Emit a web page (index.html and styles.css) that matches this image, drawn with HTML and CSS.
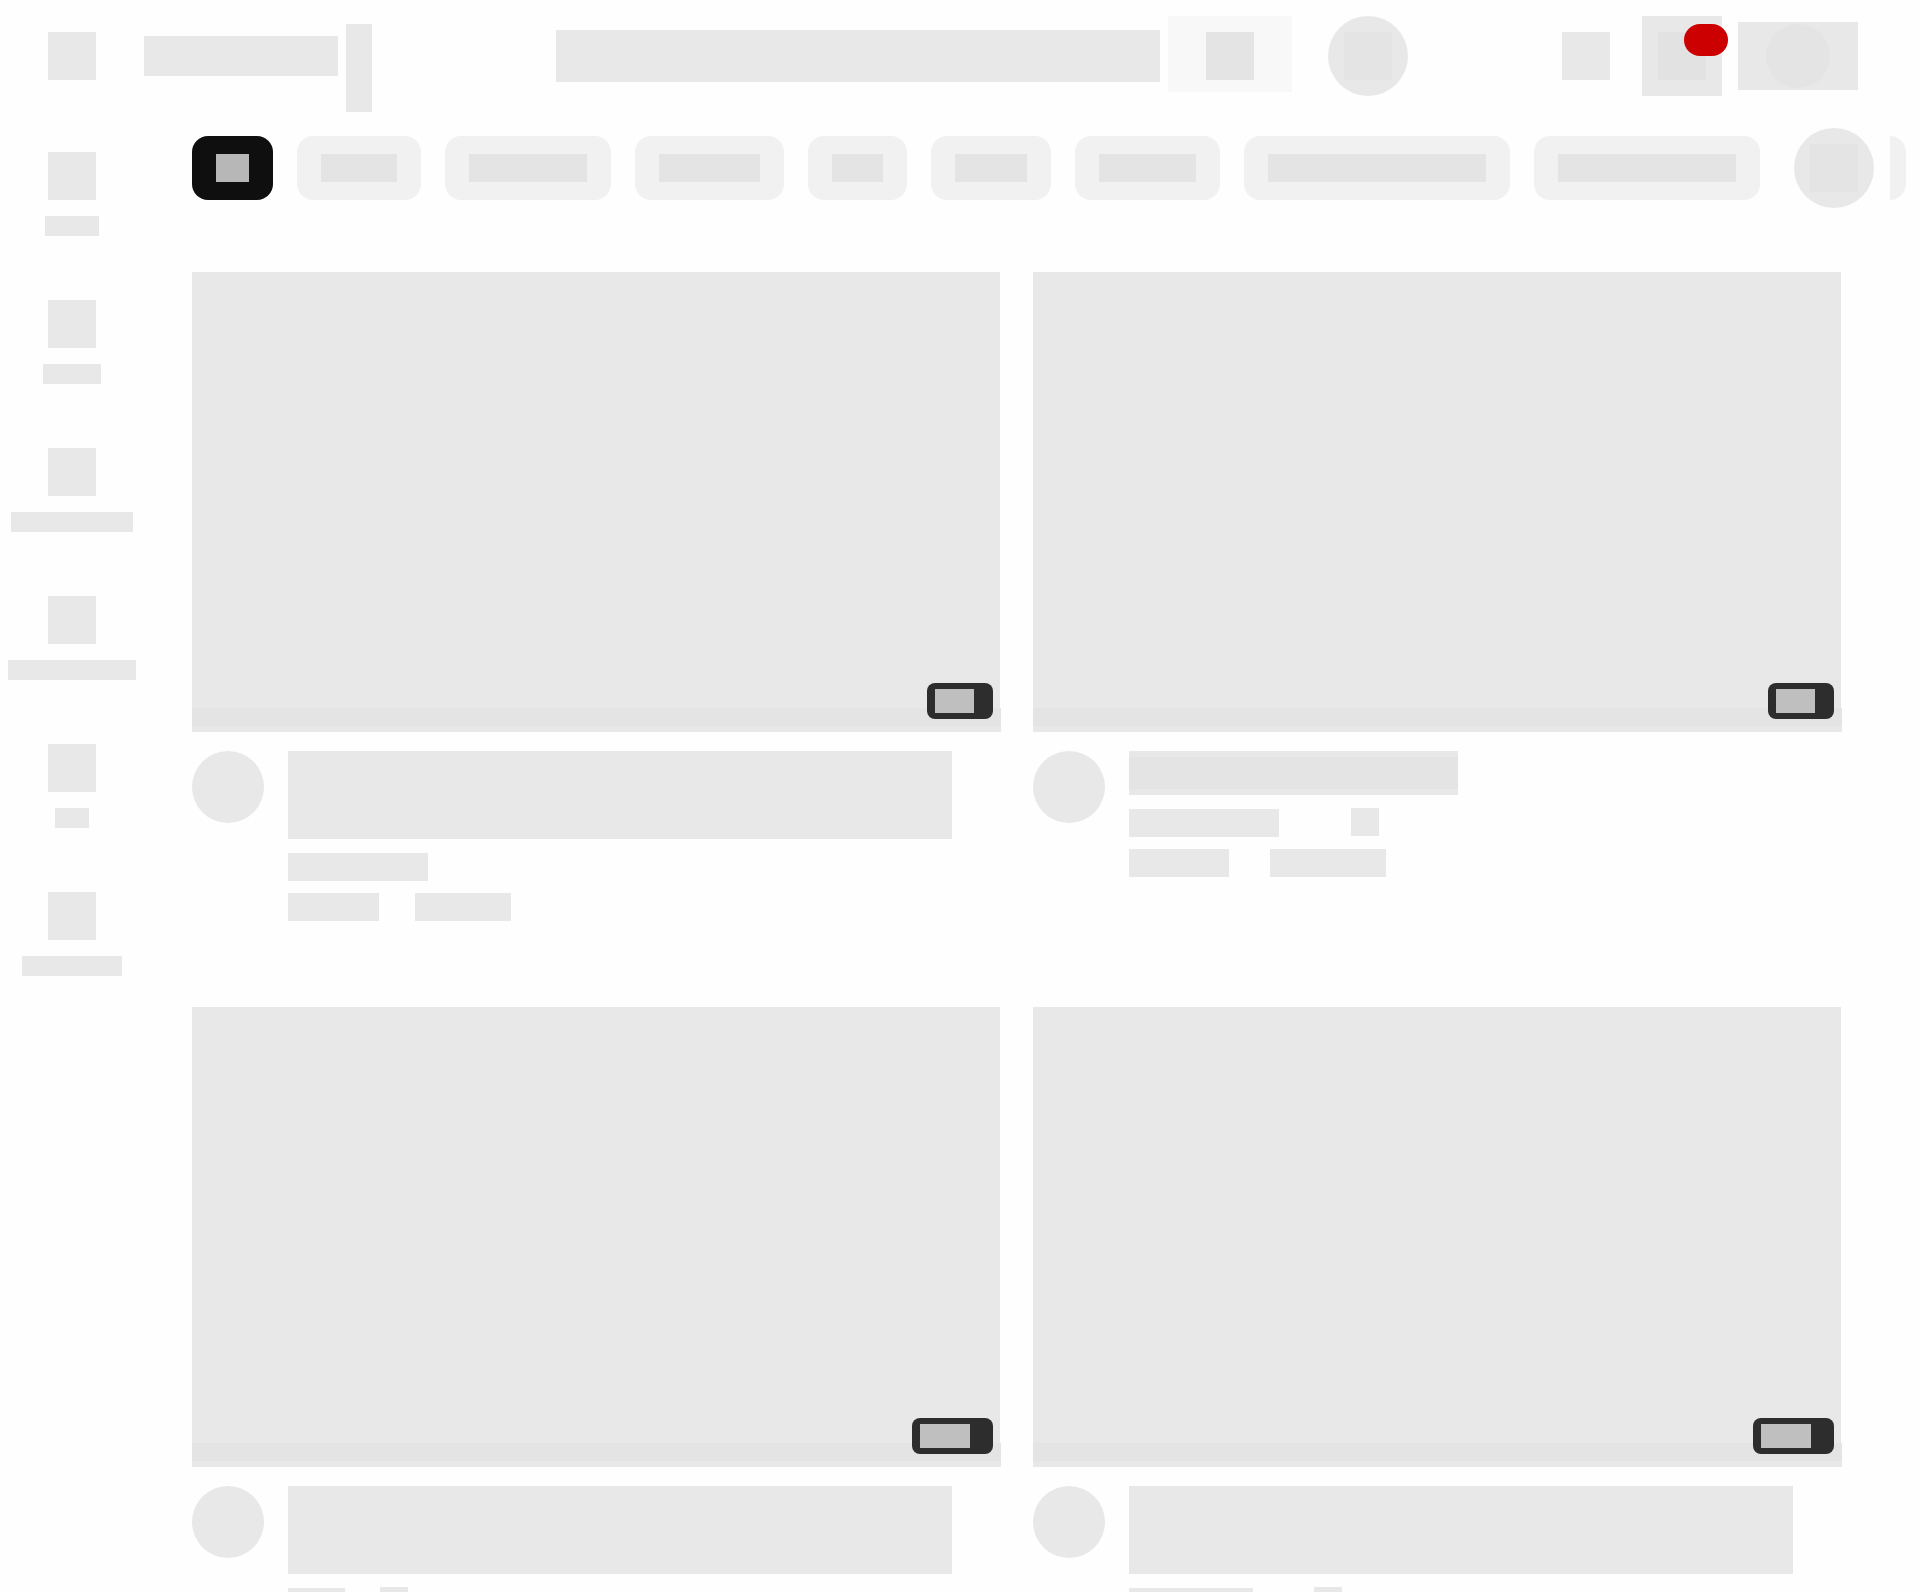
FILE: index.html
```html
<!DOCTYPE html>
<html lang="en">
<head>
<meta charset="utf-8">
<meta name="viewport" content="width=device-width, initial-scale=1">
<title>Home</title>
<link rel="stylesheet" href="styles.css">
</head>
<body>
<header class="topbar">
  <button class="icon" aria-label="Menu"></button>
  <div class="brand">
    <a class="logo" href="#" aria-label="Home"></a>
    <span class="country"></span>
  </div>
  <form class="search" role="search">
    <input class="search-box" type="text" aria-label="Search">
    <button class="search-button" type="button" aria-label="Run search"><span class="icon inner"></span></button>
    <button class="round voice" type="button" aria-label="Voice search"><span class="icon inner"></span></button>
  </form>
  <div class="account">
    <button class="icon" aria-label="Create"></button>
    <button class="bell" aria-label="Notifications"><span class="icon inner"></span><span class="count"></span></button>
    <button class="profile" aria-label="Account"><span class="face"></span></button>
  </div>
</header>
<div class="page">
  <nav class="rail" aria-label="Sections">
    <a class="rail-item" href="#" aria-label="Section 1"><span class="icon"></span><span class="rail-label" style="width:54px"></span></a>
    <a class="rail-item" href="#" aria-label="Section 2"><span class="icon"></span><span class="rail-label" style="width:58px"></span></a>
    <a class="rail-item" href="#" aria-label="Section 3"><span class="icon"></span><span class="rail-label" style="width:122px"></span></a>
    <a class="rail-item" href="#" aria-label="Section 4"><span class="icon"></span><span class="rail-label" style="width:128px"></span></a>
    <a class="rail-item" href="#" aria-label="Section 5"><span class="icon"></span><span class="rail-label" style="width:34px"></span></a>
    <a class="rail-item" href="#" aria-label="Section 6"><span class="icon"></span><span class="rail-label" style="width:100px"></span></a>
  </nav>
  <main class="content">
    <div class="filters">
      <div class="chips">
        <button class="chip active" aria-label="Filter 1"><span class="chip-label" style="width:33px"></span></button>
        <button class="chip" aria-label="Filter 2"><span class="chip-label" style="width:76px"></span></button>
        <button class="chip" aria-label="Filter 3"><span class="chip-label" style="width:118px"></span></button>
        <button class="chip" aria-label="Filter 4"><span class="chip-label" style="width:101px"></span></button>
        <button class="chip" aria-label="Filter 5"><span class="chip-label" style="width:51px"></span></button>
        <button class="chip" aria-label="Filter 6"><span class="chip-label" style="width:72px"></span></button>
        <button class="chip" aria-label="Filter 7"><span class="chip-label" style="width:97px"></span></button>
        <button class="chip" aria-label="Filter 8"><span class="chip-label" style="width:218px"></span></button>
        <button class="chip" aria-label="Filter 9"><span class="chip-label" style="width:178px"></span></button>
      </div>
      <button class="round" aria-label="Next filters"><span class="icon inner"></span></button>
      <span class="chip-end"></span>
    </div>
    <div class="feed">
      <article class="card">
        <a class="thumb" href="#" aria-label="Play video 1"><span class="still"></span><span class="progress"></span><span class="duration" style="width:66px"><span class="time" style="width:39px"></span></span></a>
        <div class="details">
          <span class="avatar"></span>
          <div class="text">
            <a class="title" href="#" aria-label="Video 1"></a>
            <div class="line"><span class="bar" style="width:140px"></span></div>
            <div class="line"><span class="slot" style="width:127px"><span class="bar" style="width:91px"></span></span><span class="bar" style="width:96px"></span></div>
          </div>
        </div>
      </article>
      <article class="card">
        <a class="thumb" href="#" aria-label="Play video 2"><span class="still"></span><span class="progress"></span><span class="duration" style="width:66px"><span class="time" style="width:39px"></span></span></a>
        <div class="details">
          <span class="avatar"></span>
          <div class="text">
            <a class="title short" href="#" aria-label="Video 2"></a>
            <div class="line"><span class="slot" style="width:222px"><span class="bar" style="width:150px"></span></span><span class="bar verified"></span></div>
            <div class="line"><span class="slot" style="width:141px"><span class="bar" style="width:100px"></span></span><span class="bar" style="width:116px"></span></div>
          </div>
        </div>
      </article>
      <article class="card">
        <a class="thumb" href="#" aria-label="Play video 3"><span class="still"></span><span class="progress"></span><span class="duration" style="width:81px"><span class="time" style="width:50px"></span></span></a>
        <div class="details">
          <span class="avatar"></span>
          <div class="text">
            <a class="title" href="#" aria-label="Video 3"></a>
            <div class="line"><span class="slot" style="width:92px"><span class="bar" style="width:57px"></span></span><span class="bar verified"></span></div>
          </div>
        </div>
      </article>
      <article class="card">
        <a class="thumb" href="#" aria-label="Play video 4"><span class="still"></span><span class="progress"></span><span class="duration" style="width:81px"><span class="time" style="width:50px"></span></span></a>
        <div class="details">
          <span class="avatar"></span>
          <div class="text">
            <a class="title" href="#" aria-label="Video 4"></a>
            <div class="line"><span class="slot" style="width:185px"><span class="bar" style="width:124px"></span></span><span class="bar verified"></span></div>
          </div>
        </div>
      </article>
    </div>
  </main>
</div>
</body>
</html>
```
FILE: styles.css
```css
:root {
  --page: #fefefe;
  --block: #e8e8e8;
  --block-inner: #e4e4e4;
  --chip: #f1f1f1;
}

* { box-sizing: border-box; }

body {
  margin: 0;
  height: 100vh;
  display: flex;
  flex-direction: column;
  overflow: hidden;
  background: var(--page);
  font-family: Roboto, "Liberation Sans", sans-serif;
}

button, input {
  margin: 0;
  padding: 0;
  border: 0;
  border-radius: 0;
  font: inherit;
}

.icon {
  display: block;
  flex: none;
  width: 48px;
  height: 48px;
  background: var(--block);
}
.icon.inner { background: var(--block-inner); }

.round {
  display: grid;
  place-items: center;
  flex: none;
  width: 80px;
  height: 80px;
  border-radius: 50%;
  background: var(--block);
}

/* Top bar */
.topbar {
  display: flex;
  flex: none;
  align-items: center;
  height: 112px;
  padding: 0 62px 0 48px;
}
.brand {
  display: flex;
  align-self: stretch;
  align-items: center;
  gap: 8px;
  margin-left: 48px;
}
.logo { width: 194px; height: 40px; background: var(--block); }
.country { align-self: flex-end; width: 26px; height: 88px; background: var(--block); }

.search {
  display: flex;
  flex: 1;
  align-items: center;
  height: 80px;
  min-width: 0;
  padding: 0 154px 0 184px;
}
.search-box {
  flex: 1;
  min-width: 0;
  height: 52px;
  padding: 0 16px;
  background: var(--block);
}
.search-button {
  display: flex;
  flex: none;
  align-self: flex-start;
  align-items: flex-start;
  justify-content: center;
  width: 124px;
  height: 76px;
  margin-left: 8px;
  padding-top: 16px;
  background: #f8f8f8;
}
.voice { margin-left: 36px; }

.account { display: flex; align-items: center; }
.bell {
  position: relative;
  display: grid;
  place-items: center;
  width: 80px;
  height: 80px;
  margin: 0 16px 0 32px;
  background: var(--block);
}
.bell .icon { background: #e2e2e2; }
.count {
  position: absolute;
  top: 8px;
  right: -6px;
  width: 44px;
  height: 32px;
  border-radius: 16px;
  background: #cc0000;
}
.profile {
  display: grid;
  place-items: center;
  width: 120px;
  height: 68px;
  background: var(--block);
}
.face { width: 64px; height: 64px; border-radius: 50%; background: var(--block-inner); }

/* Side rail */
.page { display: flex; flex: 1; min-height: 0; }
.rail {
  display: flex;
  flex: none;
  flex-direction: column;
  gap: 64px;
  width: 144px;
  padding-top: 40px;
}
.rail-item { display: flex; flex-direction: column; align-items: center; gap: 16px; }
.rail-label { height: 20px; background: var(--block); }

/* Filters */
.content {
  flex: 1;
  min-width: 0;
  padding-top: 16px;
  overflow-y: auto;
  scrollbar-width: none;
}
.filters {
  display: flex;
  align-items: center;
  gap: 16px;
  padding: 0 14px 0 48px;
}
.chips { display: flex; flex: 1; gap: 24px; min-width: 0; overflow: hidden; }
.chip {
  display: flex;
  flex: none;
  align-items: center;
  height: 64px;
  padding: 0 24px;
  border-radius: 16px;
  background: var(--chip);
}
.chip-label { height: 28px; background: var(--block-inner); }
.chip.active { background: #0f0f0f; }
.chip.active .chip-label { background: #b7b7b7; }
.chip-end {
  flex: none;
  width: 16px;
  height: 64px;
  border-radius: 0 16px 16px 0;
  background: var(--chip);
}

/* Video feed */
.feed {
  display: grid;
  grid-template-columns: repeat(2, minmax(0, 1fr));
  gap: 86px 32px;
  margin-top: 64px;
  padding: 0 78px 0 48px;
}
.thumb {
  position: relative;
  display: flex;
  aspect-ratio: 16 / 9;
}
.still { flex: 1; margin-right: 1px; background: var(--block); }
.progress {
  position: absolute;
  right: 0;
  bottom: -5px;
  left: 0;
  height: 24px;
  background: linear-gradient(var(--block-inner) 18px, var(--block) 18px);
}
.duration {
  position: absolute;
  right: 8px;
  bottom: 8px;
  height: 36px;
  padding: 6px 8px;
  border-radius: 8px;
  background: #2d2d2d;
}
.time { display: block; height: 24px; background: #bfbfbf; }

.details { display: flex; gap: 24px; margin-top: 24px; }
.avatar {
  flex: none;
  width: 72px;
  height: 72px;
  border-radius: 50%;
  background: var(--block);
}
.text { flex: 1; min-width: 0; padding-right: 49px; }
.title { display: block; height: 88px; margin-bottom: 14px; background: var(--block); }
.title.short {
  width: 329px;
  height: 44px;
  background: linear-gradient(var(--block) 6px, var(--block-inner) 6px, var(--block-inner) 38px, var(--block) 38px);
}
.line { display: flex; margin-bottom: 12px; }
.line:last-child { margin-bottom: 0; }
.slot { flex: none; }
.bar { display: block; height: 28px; background: var(--block); }
.verified { width: 28px; margin-top: -1px; }
```
